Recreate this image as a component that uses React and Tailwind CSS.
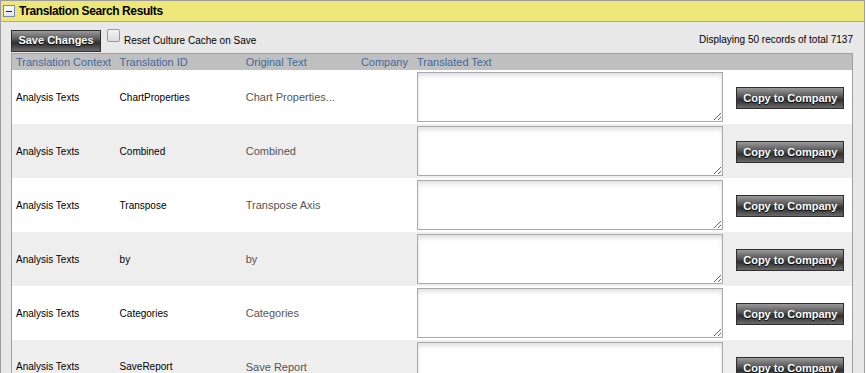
import React from 'react';

const rows = [
  { ctx: 'Analysis Texts', id: 'ChartProperties', orig: 'Chart Properties...' },
  { ctx: 'Analysis Texts', id: 'Combined', orig: 'Combined' },
  { ctx: 'Analysis Texts', id: 'Transpose', orig: 'Transpose Axis' },
  { ctx: 'Analysis Texts', id: 'by', orig: 'by' },
  { ctx: 'Analysis Texts', id: 'Categories', orig: 'Categories' },
  { ctx: 'Analysis Texts', id: 'SaveReport', orig: 'Save Report' },
];

const darkBtn =
  'border border-[#2e2e2e] bg-[linear-gradient(to_bottom,#9a9a9a_0%,#5a5a5a_40%,#2f2f2f_60%,#6a6a6a_100%)] text-white font-bold text-[11px] [text-shadow:0_1px_1px_#000] leading-none';

const App = () => {
  return (
    <div className="w-[865px] h-[373px] overflow-hidden bg-white font-['Liberation_Sans',Arial,sans-serif]">
      <div className="h-full border-x border-t border-[#9c9c9c] bg-[#e8e8e8]">
        {/* Panel title bar */}
        <div className="h-[21px] bg-[#ede77a] border-b border-[#a8a8a8] flex items-center pl-[2px]">
          <div className="w-[12px] h-[12px] border border-[#7a8aa8] bg-[linear-gradient(to_bottom,#ffffff,#dfe4ee)] flex items-center justify-center">
            <div className="w-[6px] h-[1px] bg-[#1b2a4a]" />
          </div>
          <span className="ml-[4px] text-[12px] tracking-[-0.4px] font-bold text-black">Translation Search Results</span>
        </div>

        {/* Toolbar */}
        <div className="flex items-center px-[10px] pt-[6px] h-[31px]">
          <button className={`${darkBtn} w-[90px] h-[22px]`}>Save Changes</button>
          <div className="ml-[6px] self-start mt-[1px] w-[13px] h-[13px] border border-[#9a9a9a] rounded-[2px] bg-[linear-gradient(to_bottom,#f4f4f4,#dcdcdc)]" />
          <span className="ml-[4px] text-[10px] text-black self-start mt-[5px]">Reset Culture Cache on Save</span>
          <span className="ml-auto mr-[1px] text-[10px] text-black self-start mt-[4px]">Displaying 50 records of total 7137</span>
        </div>

        {/* Results table */}
        <div className="px-[10px]">
          <table className="w-[842px] table-fixed border-collapse border border-[#a0a0a0]">
            <colgroup>
              <col className="w-[104px]" />
              <col className="w-[126px]" />
              <col className="w-[115px]" />
              <col className="w-[56px]" />
              <col className="w-[313px]" />
              <col className="w-[126px]" />
            </colgroup>
            <thead>
              <tr className="bg-[#c0c0c0] h-[16px] text-[11px] text-[#44689a] text-left">
                <th className="font-normal pl-[4px] leading-[16px] whitespace-nowrap">Translation Context</th>
                <th className="font-normal pl-[4px] leading-[16px]">Translation ID</th>
                <th className="font-normal pl-[4px] leading-[16px]">Original Text</th>
                <th className="font-normal pl-[4px] leading-[16px]">Company</th>
                <th className="font-normal pl-[4px] leading-[16px]">Translated Text</th>
                <th />
              </tr>
            </thead>
            <tbody>
              {rows.map((r, i) => (
                <tr key={r.id} className={`h-[54px] ${i % 2 ? 'bg-[#eeeeee]' : 'bg-white'}`}>
                  <td className="pl-[4px] text-[10px] text-black align-middle">{r.ctx}</td>
                  <td className="pl-[4px] text-[10px] text-black align-middle">{r.id}</td>
                  <td className="pl-[4px] text-[11px] text-[#555555] align-middle">{r.orig}</td>
                  <td />
                  <td className="pl-[4px] align-middle">
                    <textarea className="block w-[306px] h-[50px] border border-[#a9a9a9] bg-white shadow-[inset_0_3px_4px_rgba(0,0,0,0.12)] resize" />
                  </td>
                  <td className="pl-[10px] align-middle">
                    <button className={`${darkBtn} w-[108px] h-[22px]`}>Copy to Company</button>
                  </td>
                </tr>
              ))}
            </tbody>
          </table>
        </div>
      </div>
    </div>
  );
};

export default App;
